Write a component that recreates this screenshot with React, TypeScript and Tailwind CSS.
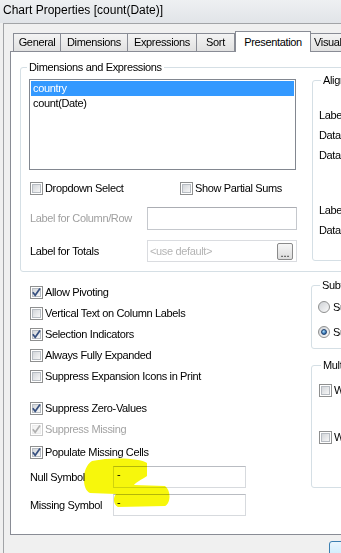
import type { ReactNode } from "react";

function Check({ checked = false, disabled = false }: { checked?: boolean; disabled?: boolean }) {
  return (
    <span
      className={`relative w-[13px] h-[13px] shrink-0 border bg-white p-[1px] flex ${
        disabled ? "border-[#c8c8c8]" : "border-[#8e8f8f]"
      }`}
    >
      <span
        className={`flex-1 border ${
          disabled
            ? "border-[#ececec] bg-[#f4f4f4]"
            : "border-[#b7bcc2] bg-gradient-to-br from-[#d3d6da] to-[#f7f7f7]"
        }`}
      />
      {checked && (
        <svg className="absolute inset-0" width="11" height="11" viewBox="0 0 11 11">
          <path
            d="M1.8 5.2 L4.2 8.3 L9 1.6"
            fill="none"
            stroke={disabled ? "#b0b0b0" : "#37507f"}
            strokeWidth="1.7"
          />
        </svg>
      )}
    </span>
  );
}

function Radio({ checked = false }: { checked?: boolean }) {
  return (
    <span className="w-[12px] h-[12px] shrink-0 rounded-full border border-[#8e8f8f] bg-gradient-to-br from-[#cfd2d6] to-[#fafafa] flex items-center justify-center">
      {checked && (
        <span className="w-[6px] h-[6px] rounded-full border border-[#1f416f] bg-[radial-gradient(circle_at_40%_35%,#a8dcfb,#2463a6_75%)]" />
      )}
    </span>
  );
}

function Group({ title, className, children }: { title: string; className: string; children?: ReactNode }) {
  return (
    <fieldset className={`border border-[#d5dfe5] rounded-[3px] ${className}`}>
      <legend className="ml-[2px] px-[2px] leading-[13px]">{title}</legend>
      {children}
    </fieldset>
  );
}

function CheckRow({ label, checked, disabled, className = "" }: { label: string; checked?: boolean; disabled?: boolean; className?: string }) {
  return (
    <div className={`flex items-center h-[13px] gap-[2px] ${className}`}>
      <Check checked={checked} disabled={disabled} />
      <span className={`leading-[13px] whitespace-nowrap ${disabled ? "text-[#a3a3a3]" : ""}`}>{label}</span>
    </div>
  );
}

const tabs = [
  { name: "General", w: "w-[48px]", first: true },
  { name: "Dimensions", w: "w-[68px]" },
  { name: "Expressions", w: "w-[70px]" },
  { name: "Sort", w: "w-[39px]" },
];

export default function App() {
  return (
    <div className="relative w-[341px] h-[553px] overflow-hidden bg-[#f0f0f0] text-black font-['Liberation_Sans',Arial,sans-serif] text-[11px] tracking-[-0.35px]">
      {/* title bar */}
      <div className="h-[23px] pl-[3px] pt-[3px] bg-gradient-to-b from-[#eef0f2] to-[#e1e4e8] text-[12px] tracking-normal leading-[14px] whitespace-nowrap">
        Chart Properties [count(Date)]
      </div>

      {/* client area */}
      <div className="ml-[3px] h-[530px] border-l border-t border-[#a2a4a7] pl-[6px] pt-[7px]">
        {/* tab strip */}
        <div className="flex items-end h-[20px] pl-[3px]">
          {tabs.map((t) => (
            <div
              key={t.name}
              className={`${t.w} ${t.first ? "" : "-ml-px"} h-[18px] shrink-0 border-t border-l border-r border-[#898c95] bg-gradient-to-b from-[#f4f4f4] to-[#e1e1e1] flex items-center justify-center whitespace-nowrap leading-[13px]`}
            >
              {t.name}
            </div>
          ))}
          <div className="relative z-10 w-[76px] h-[21px] -mb-px shrink-0 border-t border-l border-r border-[#898c95] bg-white flex items-center justify-center whitespace-nowrap leading-[13px]">
            Presentation
          </div>
          <div className="-ml-px w-[45px] h-[18px] shrink-0 border-t border-l border-r border-[#898c95] bg-gradient-to-b from-[#f4f4f4] to-[#e1e1e1] flex items-center pl-[3px] whitespace-nowrap leading-[13px]">
            Visual Cues
          </div>
        </div>

        {/* tab panel */}
        <div className="w-[400px] h-[484px] border border-[#898c95] bg-white pl-[9px] pt-[9px]">
          <fieldset className="w-[380px] h-[211px] border border-[#d5dfe5] rounded-[3px]">
            <legend className="ml-[6px] px-[2px] leading-[13px]">Dimensions and Expressions</legend>
            <div className="flex pl-[8px]">
              <div className="w-[268px] shrink-0">
                <div className="mt-[5px] w-[267px] h-[91px] border border-[#828790] p-[1px]">
                  <div className="h-[15px] leading-[15px] pl-[2px] bg-[#3399ff] text-white">country</div>
                  <div className="h-[15px] leading-[15px] pl-[2px]">count(Date)</div>
                </div>
                <div className="mt-[12px] ml-[1px] flex">
                  <CheckRow label="Dropdown Select" className="w-[150px]" />
                  <CheckRow label="Show Partial Sums" />
                </div>
                <div className="mt-[12px] ml-[1px] flex items-center">
                  <span className="w-[117px] text-[#a0a0a0] whitespace-nowrap">Label for Column/Row</span>
                  <div className="w-[150px] h-[23px] border border-[#c5c8cd] border-t-[#abadb3]" />
                </div>
                <div className="mt-[10px] ml-[1px] flex items-center">
                  <span className="w-[117px] whitespace-nowrap">Label for Totals</span>
                  <div className="w-[150px] h-[22px] border border-[#dadce0] flex items-center pl-[2px] pr-[3px] text-[#b4b4b4]">
                    <span className="flex-1">&lt;use default&gt;</span>
                    <span className="w-[16px] h-[17px] border border-[#8a8a8a] rounded-[2px] bg-gradient-to-b from-[#f6f6f6] to-[#dcdcdc] text-black flex items-end justify-center leading-[12px] tracking-normal">
                      ...
                    </span>
                  </div>
                </div>
              </div>

              <Group title="Alignment" className="ml-[15px] w-[80px] h-[187px] pl-[6px]">
                <div className="mt-[18px] leading-[20px]">
                  <div>Label</div>
                  <div>Data (Numeric)</div>
                  <div>Data (Text)</div>
                </div>
                <div className="mt-[35px] leading-[20px]">
                  <div>Label (Multiline)</div>
                  <div>Data (Multiline)</div>
                </div>
              </Group>
            </div>
          </fieldset>

          <div className="flex">
            <div className="w-[291px] shrink-0 pl-[10px]">
              <div className="mt-[14px] flex flex-col gap-[8px]">
                <CheckRow label="Allow Pivoting" checked />
                <CheckRow label="Vertical Text on Column Labels" />
                <CheckRow label="Selection Indicators" checked />
                <CheckRow label="Always Fully Expanded" />
                <CheckRow label="Suppress Expansion Icons in Print" />
              </div>
              <CheckRow label="Suppress Zero-Values" checked className="mt-[19px]" />
              <CheckRow label="Suppress Missing" checked disabled className="mt-[8px]" />
              <CheckRow label="Populate Missing Cells" checked className="mt-[10px]" />
              <div className="mt-[7px] flex items-center">
                <span className="w-[83px] whitespace-nowrap">Null Symbol</span>
                <div className="w-[133px] h-[22px] border border-[#d7dade] border-t-[#b9bcc2] pl-[3px] leading-[14px]">-</div>
              </div>
              <div className="mt-[6px] flex items-center">
                <span className="w-[83px] whitespace-nowrap">Missing Symbol</span>
                <div className="w-[133px] h-[22px] border border-[#d7dade] border-t-[#b9bcc2] pl-[3px] leading-[14px]">-</div>
              </div>
            </div>

            <div className="w-[90px] shrink-0">
              <Group title="Subtotals" className="mt-[7px] h-[70px] pl-[6px]">
                <div className="mt-[9px] flex flex-col gap-[13px]">
                  <div className="flex items-center gap-[3px] h-[12px]">
                    <Radio />
                    <span className="whitespace-nowrap">Subtotals on Top</span>
                  </div>
                  <div className="flex items-center gap-[3px] h-[12px]">
                    <Radio checked />
                    <span className="whitespace-nowrap">Subtotals at Bottom</span>
                  </div>
                </div>
              </Group>
              <Group title="Multiline Settings" className="mt-[10px] h-[129px] pl-[7px]">
                <CheckRow label="Wrap Header Text" className="mt-[12px]" />
                <CheckRow label="Wrap Cell Text" className="mt-[34px]" />
              </Group>
            </div>
          </div>
        </div>

        <div className="mt-[6px] ml-[319px] w-[80px] h-[24px] border border-[#3c7fb1] rounded-[3px] bg-gradient-to-b from-[#eaf6fd] to-[#bee6fd]" />
      </div>

      {/* yellow marker scribble */}
      <svg className="absolute left-0 top-0 pointer-events-none mix-blend-multiply" width="341" height="553" viewBox="0 0 341 553">
        <path
          d="M92 461 C112 457 140 458 147 463 L147 476 C141 480 136 482 134 485 L165 486 C171 490 171 503 165 506 L118 507 C113 505 113 497 116 494 L90 493 C82 490 81 468 92 461 Z"
          fill="#f7f70c"
        />
      </svg>
    </div>
  );
}
